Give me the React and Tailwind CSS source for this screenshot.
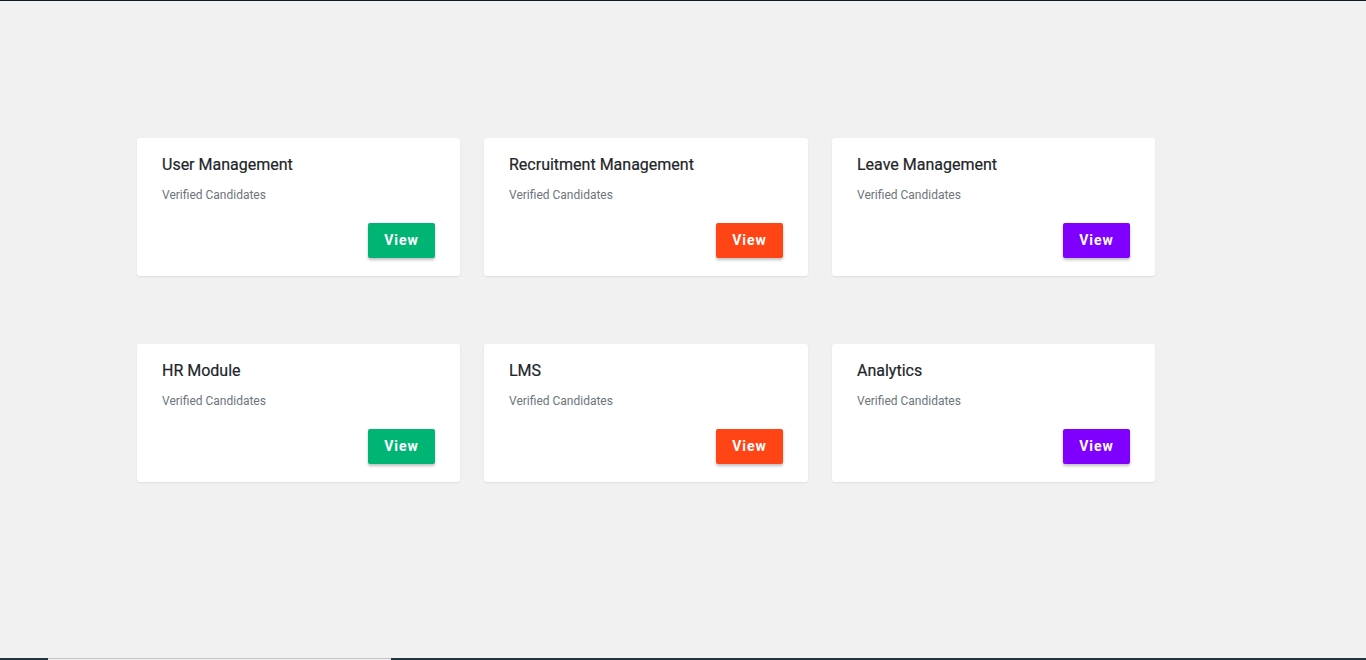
const modules = [
  { title: "User Management", color: "bg-[#00b574]" },
  { title: "Recruitment Management", color: "bg-[#ff4515]" },
  { title: "Leave Management", color: "bg-[#8000ff]" },
  { title: "HR Module", color: "bg-[#00b574]" },
  { title: "LMS", color: "bg-[#ff4515]" },
  { title: "Analytics", color: "bg-[#8000ff]" },
];

const ModuleCard = ({ title, color }) => (
  <div className="bg-white rounded-[3px] shadow-[0_1px_2px_rgba(0,0,0,0.08)] h-[138px] px-[25px] pt-[15px] pb-[18px] flex flex-col">
    <h3 className="text-[16px] leading-6 font-normal text-[#212529] [-webkit-text-stroke:0.2px_#212529]">{title}</h3>
    <p className="mt-[9px] text-[12px] leading-[18px] text-[#6c757d]">
      Verified Candidates
    </p>
    <div className="mt-auto flex justify-end">
      <button
        className={`${color} text-white text-[14px] font-bold tracking-[1px] h-[35px] w-[67px] rounded-[2px] shadow-[0_2px_3px_rgba(0,0,0,0.25)]`}
      >
        View
      </button>
    </div>
  </div>
);

export default function App() {
  return (
    <div className="h-[660px] bg-[#f1f1f1] flex flex-col font-['Roboto',sans-serif] overflow-hidden">
      <div className="h-px bg-[#0d1b22]" />
      <main className="flex-1 pl-[137px] pt-[137px]">
        <div className="grid grid-cols-[323px_324px_323px] gap-x-6 gap-y-[68px]">
          {modules.map((m) => (
            <ModuleCard key={m.title} title={m.title} color={m.color} />
          ))}
        </div>
      </main>
      <div className="h-[2px] flex">
        <div className="w-12 bg-[#1f3640]" />
        <div className="w-[343px] bg-[#f1f1f1] border-t border-[#c4c4c4]" />
        <div className="flex-1 bg-[#1f3640]" />
      </div>
    </div>
  );
}
